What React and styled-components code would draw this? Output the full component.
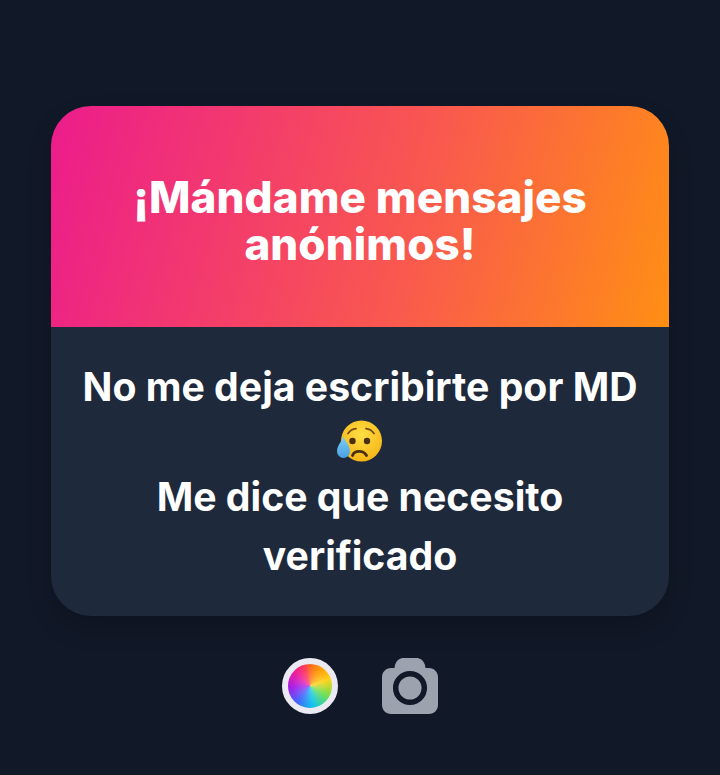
import React from "react";
import styled, { createGlobalStyle } from "styled-components";

const Global = createGlobalStyle`
  html, body { margin: 0; padding: 0; background: #111827; }
  body { font-family: Inter, "Liberation Sans", sans-serif; }
`;

const Page = styled.div`
  width: 720px;
  height: 775px;
  background: #111827;
  padding: 106px 51px 0;
  box-sizing: border-box;
  overflow: hidden;
`;

const Card = styled.div`
  width: 618px;
  height: 510px;
  border-radius: 40px;
  overflow: hidden;
  display: flex;
  flex-direction: column;
  background: #1e293b;
  box-shadow: 0 12px 24px rgba(0, 0, 0, 0.18);
`;

const Header = styled.div`
  height: 221px;
  padding-top: 8px;
  box-sizing: border-box;
  display: flex;
  align-items: center;
  justify-content: center;
  background: linear-gradient(105deg, #ec1c8c 0%, #f9584f 58%, #ff8f14 100%);
`;

const Title = styled.h1`
  margin: 0;
  color: #fff;
  font-size: 44px;
  line-height: 47px;
  font-weight: 800;
  letter-spacing: 0.08px;
  text-align: center;
  width: 520px;
`;

const Body = styled.div`
  flex: 1;
  display: flex;
  align-items: center;
  justify-content: center;
  padding: 0 10px 2px;
`;

const Message = styled.p`
  margin: 0;
  color: #fff;
  font-size: 39.2px;
  line-height: 59px;
  font-weight: 650;
  text-align: center;
`;

const Emoji = styled.svg`
  display: block;
  margin: 4px auto 4px;
  width: 46px;
  height: 43px;
`;

const Controls = styled.div`
  display: flex;
  justify-content: center;
  align-items: center;
  gap: 44px;
  margin-top: 42px;
`;

const ColorWheel = styled.button`
  width: 56px;
  height: 56px;
  padding: 0;
  border: 6px solid #ebe9f1;
  border-radius: 50%;
  box-sizing: border-box;
  background:
    radial-gradient(circle, rgba(255, 255, 255, 0.28) 0%, rgba(255, 255, 255, 0) 60%),
    conic-gradient(#ff6a1e, #ff9a0a 30deg, #ffd21a 70deg, #6fe04f 120deg, #10c8e8 170deg, #3f6cff 215deg, #a41ee8 265deg, #ec1ea0 310deg, #ff3c5a 345deg, #ff6a1e);
`;

const CameraIcon = styled.svg`
  display: block;
  width: 56px;
  height: 56px;
`;

const SadEmoji = () => (
  <Emoji viewBox="0 0 46 43">
    <defs>
      <radialGradient id="face" cx="50%" cy="35%" r="65%">
        <stop offset="0%" stopColor="#fddf45" />
        <stop offset="100%" stopColor="#f7b416" />
      </radialGradient>
      <linearGradient id="drop" x1="0" y1="0" x2="0" y2="1">
        <stop offset="0%" stopColor="#7fd0f5" />
        <stop offset="100%" stopColor="#4a9fe2" />
      </linearGradient>
    </defs>
    <circle cx="24.500" cy="21" r="20.500" fill="url(#face)" />
    <path d="M11 13.500c2-3 5-4.500 8-4.800" fill="none" stroke="#7a4a12" strokeWidth="1.800" strokeLinecap="round" />
    <path d="M37 13.500c-2-3-5-4.500-8-4.800" fill="none" stroke="#7a4a12" strokeWidth="1.800" strokeLinecap="round" />
    <circle cx="15.500" cy="21" r="3.200" fill="#4a2f10" />
    <circle cx="30" cy="21" r="3.200" fill="#4a2f10" />
    <path d="M15.500 35.500c2-5.500 11-5.500 14 0" fill="none" stroke="#4a2f10" strokeWidth="2.800" strokeLinecap="round" />
    <path d="M6.500 16c-1.500 6-6.500 9-6.500 15.500a6.500 6.500 0 0 0 13 0c0-6.500-5-9.500-6.500-15.500z" fill="url(#drop)" />
  </Emoji>
);

const Camera = () => (
  <CameraIcon viewBox="0 0 56 56">
    <path
      fill="#9ca3af"
      d="M22 0h12c4.500 0 7.500 2.500 9 7l.5 3H47c5 0 9 4 9 9v28c0 5-4 9-9 9H9c-5 0-9-4-9-9V19c0-5 4-9 9-9h3.500l.5-3c1.500-4.500 4.500-7 9-7z"
    />
    <circle cx="28" cy="30" r="14.300" fill="none" stroke="#111827" strokeWidth="5.500" />
  </CameraIcon>
);

export default function App() {
  return (
    <Page>
      <Global />
      <Card>
        <Header>
          <Title>¡Mándame mensajes anónimos!</Title>
        </Header>
        <Body>
          <Message>
            No me deja escribirte por MD
            <SadEmoji />
            Me dice que necesito
            <br />
            verificado
          </Message>
        </Body>
      </Card>
      <Controls>
        <ColorWheel />
        <Camera />
      </Controls>
    </Page>
  );
}
